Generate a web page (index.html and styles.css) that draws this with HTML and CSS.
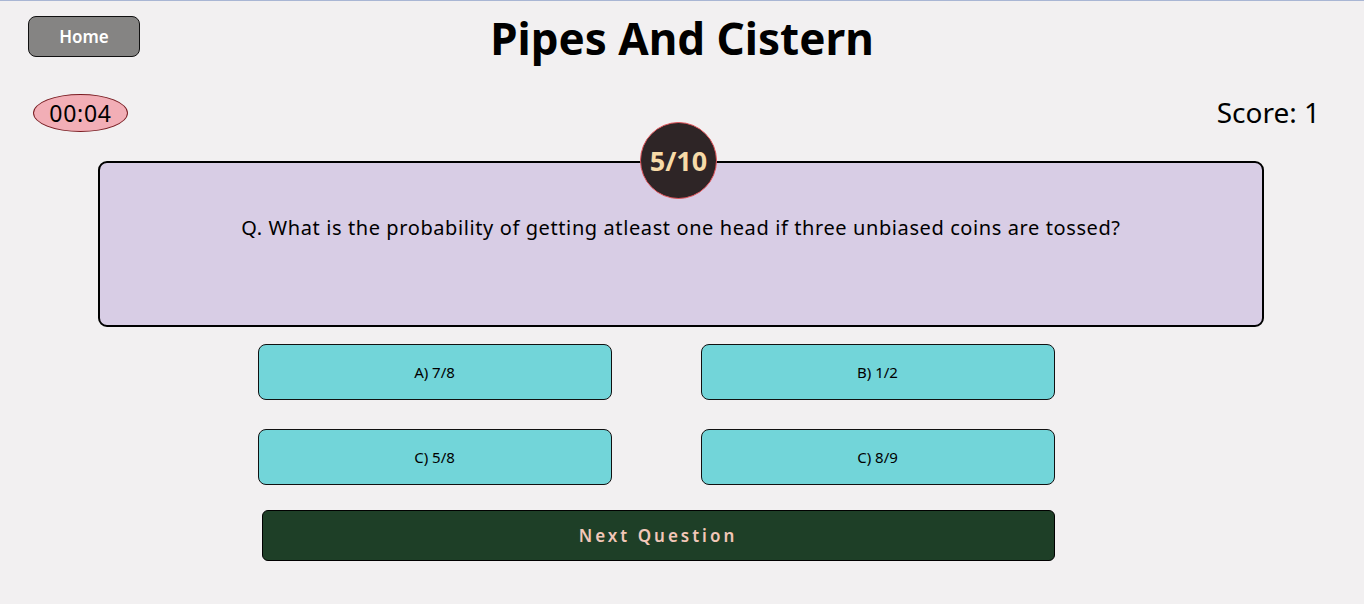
FILE: index.html
```html
<!DOCTYPE html>
<html lang="en">
<head>
<meta charset="utf-8">
<title>Pipes And Cistern</title>
<link rel="stylesheet" href="styles.css">
</head>
<body>
<div class="page">
  <header class="header">
    <div class="header-left"><button class="home-btn">Home</button></div>
    <h1 class="title">Pipes And Cistern</h1>
    <div class="header-right"></div>
  </header>
  <div class="status">
    <div class="timer">00:04</div>
    <div class="score">Score: 1</div>
  </div>
  <section class="question-wrap">
    <div class="counter">5/10</div>
    <div class="question-box">
      <p class="question">Q. What is the probability of getting atleast one head if three unbiased coins are tossed?</p>
    </div>
  </section>
  <div class="options">
    <button class="option">A) 7/8</button>
    <button class="option">B) 1/2</button>
    <button class="option">C) 5/8</button>
    <button class="option">C) 8/9</button>
  </div>
  <div class="next-row">
    <button class="next-btn">Next Question</button>
  </div>
</div>
</body>
</html>
```
FILE: styles.css
```css
* { box-sizing: border-box; }
html, body { margin: 0; padding: 0; }
body {
  background: #f2f0f1;
  font-family: "Noto Sans", "Open Sans", sans-serif;
  color: #000;
  border-top: 1px solid #a9b6d4;
  height: 604px;
  overflow: hidden;
}
.page { display: flex; flex-direction: column; }
.header {
  display: grid;
  grid-template-columns: 1fr auto 1fr;
  align-items: start;
  padding: 15px 28px 0 28px;
  height: 80px;
}
.home-btn {
  width: 112px;
  height: 41px;
  background: #858483;
  color: #fff;
  border: 1px solid #111;
  border-radius: 8px;
  font-family: inherit;
  font-size: 17px;
  font-weight: 600;
  cursor: pointer;
}
.title {
  margin: 0;
  font-size: 44px;
  font-weight: 700;
  line-height: 48px;
  margin-top: -2px;
  text-align: center;
}
.status {
  display: flex;
  justify-content: space-between;
  align-items: center;
  padding: 0 44px 0 33px;
  height: 62px;
  margin-top: 1px;
}
.timer {
  width: 95px;
  height: 38px;
  border-radius: 50%;
  background: #f2aeb6;
  border: 1px solid #7a1c22;
  display: flex;
  align-items: center;
  justify-content: center;
  font-size: 23px;
  letter-spacing: 0.7px;
  margin-top: -1px;
}
.score {
  font-size: 28px;
  margin-top: -2px;
}
.question-wrap {
  position: relative;
  margin: -22px 100px 0 98px;
  padding-top: 39px;
}
.counter {
  position: absolute;
  top: 0;
  left: 50%;
  transform: translateX(-41px);
  width: 77px;
  height: 77px;
  border-radius: 50%;
  background: #2e2526;
  border: 1px solid #e0545a;
  color: #f7dba8;
  font-size: 27px;
  font-weight: 700;
  display: flex;
  align-items: center;
  justify-content: center;
  z-index: 2;
}
.question-box {
  height: 166px;
  background: #d8cde5;
  border: 2px solid #000;
  border-radius: 9px;
  display: flex;
  justify-content: center;
  padding-top: 51px;
}
.question {
  margin: 0;
  font-size: 20px;
  line-height: 28px;
  letter-spacing: 0.6px;
  text-align: center;
}
.options {
  display: grid;
  grid-template-columns: 354px 354px;
  column-gap: 89px;
  row-gap: 29px;
  justify-content: center;
  margin: 17px 0 0 -52px;
}
.option {
  height: 56px;
  background: #72d5d9;
  border: 1px solid #111;
  border-radius: 8px;
  font-family: inherit;
  font-size: 15px;
  color: #000;
  cursor: pointer;
}
.next-row {
  display: flex;
  justify-content: center;
  margin: 25px 0 0 -48px;
}
.next-btn {
  width: 793px;
  height: 51px;
  background: #1e3f27;
  border: 1px solid #000;
  border-radius: 6px;
  color: #f2c7b8;
  font-family: inherit;
  font-size: 17px;
  font-weight: 600;
  letter-spacing: 3px;
  cursor: pointer;
}
```
